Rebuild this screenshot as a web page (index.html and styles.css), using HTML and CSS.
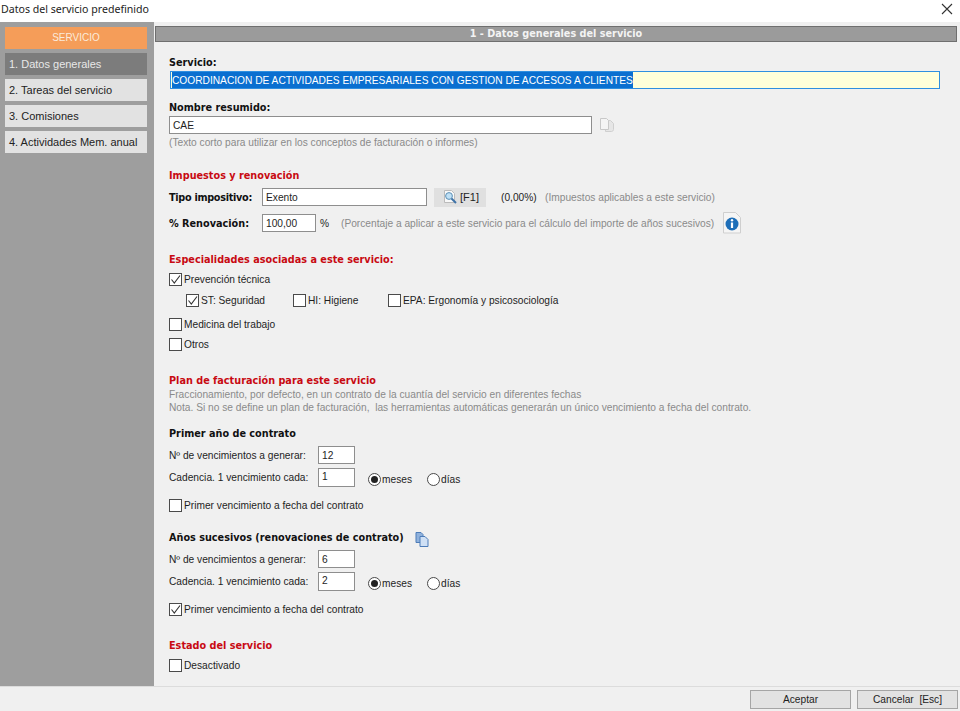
FILE: index.html
```html
<!DOCTYPE html>
<html lang="es">
<head>
<meta charset="utf-8">
<title>Datos del servicio predefinido</title>
<link rel="stylesheet" href="styles.css">
</head>
<body>
<div class="window">
  <header class="titlebar">
    <span>Datos del servicio predefinido</span>
    <svg class="close" width="12" height="12" viewBox="0 0 12 12"><path d="M1 1L11 11M11 1L1 11" stroke="#333" stroke-width="1.1" fill="none"/></svg>
  </header>
  <div class="main">
    <nav class="side">
      <div class="side-head">SERVICIO</div>
      <div class="side-item active">1. Datos generales</div>
      <div class="side-item">2. Tareas del servicio</div>
      <div class="side-item">3. Comisiones</div>
      <div class="side-item">4. Actividades Mem. anual</div>
    </nav>
    <section class="content">
      <div class="bar">1 - Datos generales del servicio</div>
      <div class="form">
        <div class="label b1">Servicio:</div>
        <div class="field yellow"><span class="sel">COORDINACION DE ACTIVIDADES EMPRESARIALES CON GESTION DE ACCESOS A CLIENTES</span></div>
        <div class="label b2">Nombre resumido:</div>
        <div class="row r18">
          <div class="field w423">CAE</div>
          <svg class="copy-faint" width="15" height="14" viewBox="0 0 15 14"><path d="M5.500 2.500h5l3 3v6c0 1-1 2-2 2h-6z" fill="#e6e6e6" stroke="#cfcfcf"/><path d="M.5.500h6l2 2v9h-8z" fill="#f4f4f4" stroke="#c8c8c8"/></svg>
        </div>
        <div class="hint h-help">(Texto corto para utilizar en los conceptos de facturación o informes)</div>

        <div class="section s-imp">Impuestos y renovación</div>
        <div class="row r18 m-tipo">
          <div class="strong lbl93 tight">Tipo impositivo:</div>
          <div class="field w165">Exento</div>
          <div class="f1">
            <svg width="16" height="16" viewBox="0 0 16 16"><path d="M2.500 1.500h7l3 3v9h-10z" fill="#f8f8f8" stroke="#bbb"/><circle cx="7" cy="7" r="3.400" fill="#bfe0f5" stroke="#5b8fb5"/><path d="M9.500 9.500l4.500 4.500" stroke="#3f73a8" stroke-width="2"/></svg>
            <span>[F1]</span>
          </div>
          <span class="pct">(0,00%)</span>
          <span class="hint">(Impuestos aplicables a este servicio)</span>
        </div>
        <div class="row r18 m-ren">
          <div class="strong lbl93">% Renovación:</div>
          <div class="field w54">100,00</div>
          <span class="unit">%</span>
          <span class="hint ren">(Porcentaje a aplicar a este servicio para el cálculo del importe de años sucesivos)</span>
          <svg class="info" width="18" height="22" viewBox="0 0 18 22"><path d="M.5.500h12l5 5v15.500h-17z" fill="#f5f5f5" stroke="#cfcfcf"/><circle cx="9" cy="12" r="6.500" fill="#1f6fb8"/><circle cx="9" cy="8.300" r="1.200" fill="#fff"/><rect x="7.900" y="10.500" width="2.200" height="5.500" fill="#fff"/></svg>
        </div>

        <div class="section s-esp">Especialidades asociadas a este servicio:</div>
        <div class="row r14 m-prev"><span class="cb"><svg width="11" height="11" viewBox="0 0 11 11"><path d="M1.500 5.500L4.300 9L10 1.500" fill="none" stroke="#333" stroke-width="1.100"/></svg></span><span class="text">Prevención técnica</span></div>
        <div class="row r14 m-sub">
          <span class="cb"><svg width="11" height="11" viewBox="0 0 11 11"><path d="M1.500 5.500L4.300 9L10 1.500" fill="none" stroke="#333" stroke-width="1.100"/></svg></span><span class="text w-st">ST: Seguridad</span>
          <span class="cb"></span><span class="text w-hi">HI: Higiene</span>
          <span class="cb"></span><span class="text">EPA: Ergonomía y psicosociología</span>
        </div>
        <div class="row r14 m-med"><span class="cb"></span><span class="text">Medicina del trabajo</span></div>
        <div class="row r14 m-otros"><span class="cb"></span><span class="text">Otros</span></div>

        <div class="section s-plan">Plan de facturación para este servicio</div>
        <div class="hint line l1">Fraccionamiento, por defecto, en un contrato de la cuantía del servicio en diferentes fechas</div>
        <div class="hint line">Nota. Si no se define un plan de facturación,&nbsp; las herramientas automáticas generarán un único vencimiento a fecha del contrato.</div>

        <div class="strong s-pri">Primer año de contrato</div>
        <div class="row r18 m-n"><span class="text lbl149">Nº de vencimientos a generar:</span><div class="field w37">12</div></div>
        <div class="row r19 m-c"><span class="text lbl149">Cadencia. 1 vencimiento cada:</span><div class="field w37 tall">1</div>
          <span class="rb first on"></span><span class="text w-mes">meses</span><span class="rb"></span><span class="text opt">días</span></div>
        <div class="row r14 m-p"><span class="cb"></span><span class="text">Primer vencimiento a fecha del contrato</span></div>

        <div class="row r14 m-anos"><span class="strong">Años sucesivos (renovaciones de contrato)</span>
          <svg class="copy" width="14" height="15" viewBox="0 0 14 15"><path d="M1 .5h5l2 2v8H1z" fill="#8fb1dc" stroke="#4d7cb8"/><path d="M5 4.500h5l3 3v7H5z" fill="#cfe0f5" stroke="#4d7cb8"/></svg>
        </div>
        <div class="row r18 m-n2"><span class="text lbl149">Nº de vencimientos a generar:</span><div class="field w37">6</div></div>
        <div class="row r19 m-c"><span class="text lbl149">Cadencia. 1 vencimiento cada:</span><div class="field w37 tall">2</div>
          <span class="rb first on"></span><span class="text w-mes">meses</span><span class="rb"></span><span class="text opt">días</span></div>
        <div class="row r14 m-p"><span class="cb"><svg width="11" height="11" viewBox="0 0 11 11"><path d="M1.500 5.500L4.300 9L10 1.500" fill="none" stroke="#333" stroke-width="1.100"/></svg></span><span class="text">Primer vencimiento a fecha del contrato</span></div>

        <div class="section s-est">Estado del servicio</div>
        <div class="row r14 m-des"><span class="cb"></span><span class="text">Desactivado</span></div>
      </div>
    </section>
  </div>
  <footer class="footer">
    <button class="btn">Aceptar</button>
    <button class="btn">Cancelar&nbsp; [Esc]</button>
  </footer>
</div>
</body>
</html>
```
FILE: styles.css
```css
* { box-sizing: border-box; }
html, body { margin: 0; height: 100%; }
body { font-family: "Liberation Sans", Arial, sans-serif; font-size: 10.2px; color: #1e1e1e; background: #f0f0f0; overflow: hidden; }
.window { width: 960px; height: 711px; display: flex; flex-direction: column; }
.titlebar { height: 22px; flex: none; background: #fff; display: flex; align-items: center; justify-content: space-between; padding: 0 7px 4px 1px; font-family: "Noto Sans", sans-serif; font-size: 10.6px; color: #222; }
.close { display: block; }
.main { flex: none; height: 665px; display: flex; border-bottom: 1px solid #dcdcdc; }
.side { width: 154px; flex: none; background: #9e9e9e; padding: 5px 7px 0 5px; display: flex; flex-direction: column; font-size: 11px; }
.side-head { height: 22px; background: #f59d59; color: #fbeadb; text-align: center; line-height: 22px; margin-bottom: 4px; font-size: 10px; }
.side-item { height: 22px; background: #e2e2e2; line-height: 22px; padding-left: 4px; margin-bottom: 4px; color: #222; white-space: nowrap; }
.side-item.active { background: #7c7c7c; color: #e8e8e8; }
.content { flex: 1; min-width: 0; padding: 4px 3px 0 1px; }
.bar { height: 16px; background: #9b9b9b; border: 1px solid #6f6f6f; color: #f3f3f3; font-family: "DejaVu Sans", sans-serif; font-weight: bold; font-size: 9.7px; line-height: 14px; text-align: center; }
.form { padding: 14px 0 0 14px; }
.label, .strong { font-family: "DejaVu Sans", sans-serif; font-weight: bold; font-size: 9.7px; color: #111; white-space: nowrap; }
.tight { letter-spacing: -0.3px; }
.label { height: 14px; line-height: 14px; }
.b1 { margin-bottom: 1px; }
.b2 { margin-top: 12px; margin-bottom: 1px; }
.field { height: 18px; background: #fff; border: 1px solid #8e8e8e; padding: 0 3px; line-height: 18px; color: #1e1e1e; white-space: nowrap; overflow: hidden; }
.field.yellow { width: 770px; margin-left: 1px; background: #ffffd9; border-color: #2f8fe0; padding: 0 1px; }
.sel { display: block; width: fit-content; background: #0a6fd0; color: #fff; height: 16px; line-height: 17px; }
.row { display: flex; align-items: center; white-space: nowrap; }
.r18 { height: 18px; }
.r19 { height: 19px; }
.r14 { height: 14px; }
.w423 { width: 423px; }
.w165 { width: 165px; }
.w54 { width: 54px; }
.w37 { width: 37px; }
.tall { height: 19px; line-height: 15px; }
.copy-faint { margin-left: 8px; }
.hint { color: #8a8a8a; white-space: nowrap; }
.h-help { height: 14px; line-height: 14px; margin-top: 2px; }
.section { font-family: "DejaVu Sans", sans-serif; font-weight: bold; font-size: 9.7px; color: #c80a12; height: 14px; line-height: 16px; white-space: nowrap; }
.s-imp { margin-top: 18px; }
.m-tipo { margin-top: 6px; }
.lbl93 { width: 93px; flex: none; }
.f1 { width: 52px; height: 19px; margin-left: 7px; background: #e0e0e0; display: flex; align-items: center; gap: 2px; padding-left: 8px; font-size: 11px; }
.pct { margin-left: 15px; width: 44px; flex: none; }
.m-ren { margin-top: 8px; }
.unit { margin-left: 4px; width: 21px; }
.info { margin-left: 9px; }
.s-esp { margin-top: 20px; }
.m-prev { margin-top: 6px; }
.cb { width: 13px; height: 13px; flex: none; border: 1px solid #4a4a4a; background: #fff; margin-right: 2px; display: flex; align-items: center; justify-content: center; }
.text { color: #1e1e1e; white-space: nowrap; }
.m-sub { margin-top: 7px; padding-left: 17px; }
.w-st { width: 92px; }
.w-hi { width: 80px; }
.m-med { margin-top: 10px; }
.m-otros { margin-top: 6px; }
.s-plan { margin-top: 22px; }
.line { height: 13px; line-height: 13px; }
.l1 { margin-top: 1px; }
.s-pri { height: 14px; line-height: 14px; margin-top: 13px; }
.m-n { margin-top: 5px; }
.lbl149 { width: 149px; flex: none; }
.m-c { margin-top: 4px; }
.rb { width: 13px; height: 13px; flex: none; border: 1px solid #4a4a4a; border-radius: 50%; background: #fff; margin-top: 4px; margin-right: 1px; display: flex; align-items: center; justify-content: center; }
.rb.on::after { content: ""; width: 7px; height: 7px; border-radius: 50%; background: #222; }
.rb.first { margin-left: 13px; }
.w-mes { width: 45px; margin-top: 4px; }
.opt { margin-top: 4px; }
.m-p { margin-top: 11px; }
.m-anos { margin-top: 18px; }
.copy { margin-left: 11px; margin-top: 5px; }
.m-n2 { margin-top: 6px; }
.s-est { margin-top: 22px; }
.m-des { margin-top: 6px; }
.footer { flex: 1; display: flex; justify-content: flex-end; gap: 6px; padding: 3px 2px 0 0; }
.btn { width: 101px; height: 19px; padding: 0; border: 1px solid #a5a5a5; background: #e2e2e2; font-family: "Liberation Sans", sans-serif; font-size: 10.2px; color: #1e1e1e; line-height: 14px; }
```
